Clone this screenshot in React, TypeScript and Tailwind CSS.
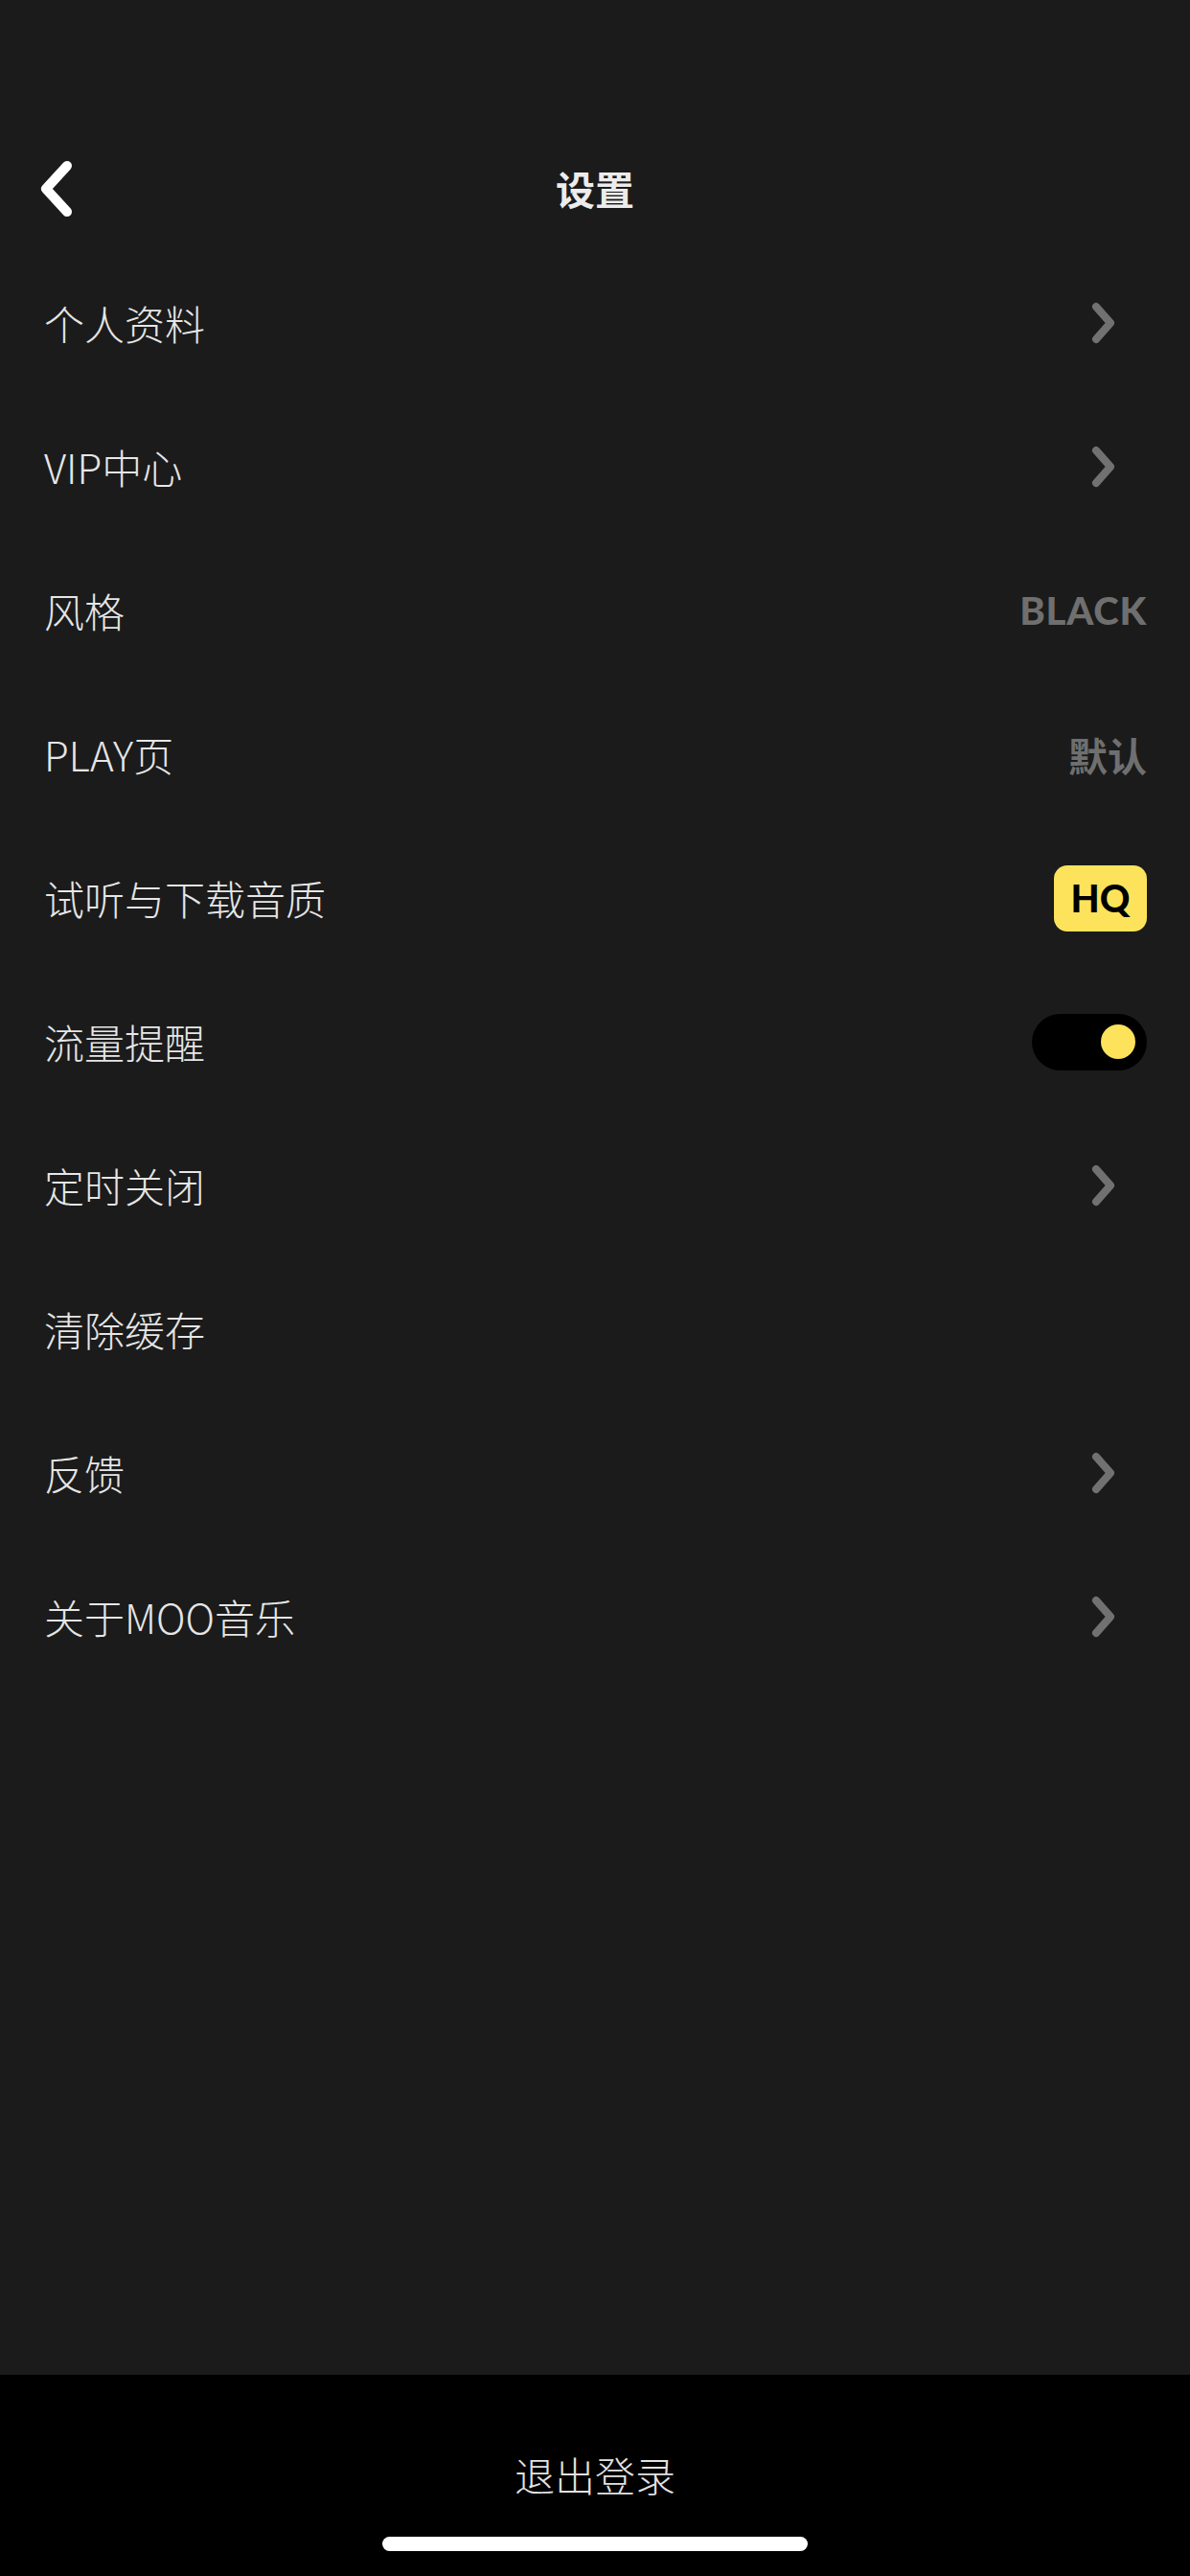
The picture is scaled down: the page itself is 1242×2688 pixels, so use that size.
import { ReactNode } from "react";

type Row = {
	label: string;
	right?: ReactNode;
};

const Chevron = () => (
	<svg width="28" height="46" viewBox="0 0 28 46" fill="none" className="mr-[31px]">
		<path d="M6 6 L21 23 L6 40" stroke="#717171" strokeWidth={8} strokeLinecap="round" strokeLinejoin="round" />
	</svg>
);

const Toggle = () => (
	<div className="w-[120px] h-[59px] rounded-full bg-black flex items-center justify-end pr-[12px]">
		<div className="w-[36px] h-[36px] rounded-full bg-[#fce35b]" />
	</div>
);

const rows: Row[] = [
	{ label: "个人资料", right: <Chevron /> },
	{ label: "VIP中心", right: <Chevron /> },
	{
		label: "风格",
		right: (
			<span className="text-[40px] font-black tracking-[0.8px] text-[#6f6f6f] font-['Lato',sans-serif] leading-none">
				BLACK
			</span>
		),
	},
	{
		label: "PLAY页",
		right: <span className="text-[41px] font-bold text-[#6f6f6f] leading-none">默认</span>,
	},
	{
		label: "试听与下载音质",
		right: (
			<div className="w-[97px] h-[69px] rounded-[14px] bg-[#fce35b] flex items-center justify-center">
				<span className="text-[39px] font-black text-black font-['Lato',sans-serif] leading-none">HQ</span>
			</div>
		),
	},
	{ label: "流量提醒", right: <Toggle /> },
	{ label: "定时关闭", right: <Chevron /> },
	{ label: "清除缓存" },
	{ label: "反馈", right: <Chevron /> },
	{ label: "关于MOO音乐", right: <Chevron /> },
];

export default function App() {
	return (
		<div className="w-[1242px] h-[2688px] bg-[#1b1b1b] flex flex-col font-['Noto_Sans_CJK_SC','Noto_Sans',sans-serif] overflow-hidden">
			{/* Header */}
			<div className="mt-[127px] h-[140px] relative flex items-center justify-center">
				<svg width="40" height="60" viewBox="0 0 40 60" fill="none" className="absolute left-[39px] top-[40px]">
					<path d="M31 6 L9 30 L31 54" stroke="#ffffff" strokeWidth={10} strokeLinecap="round" strokeLinejoin="round" />
				</svg>
				<h1 className="text-[41px] font-bold text-[#ececec] leading-none mt-[-2px]">设置</h1>
			</div>

			{/* Rows */}
			<div className="flex flex-col mt-[-5px]">
				{rows.map((row, idx) => (
					<div key={idx} className="h-[150px] flex items-center justify-between pl-[46px] pr-[45px]">
						<span className="text-[42px] font-light text-[#e6e6e6] leading-none">{row.label}</span>
						{row.right}
					</div>
				))}
			</div>

			<div className="flex-1" />

			{/* Logout */}
			<div className="h-[210px] bg-black flex flex-col items-center">
				<span className="mt-[83px] text-[42px] font-light text-[#e2e2e2] leading-none">退出登录</span>
				<div className="mt-[44px] w-[444px] h-[15px] rounded-full bg-white" />
			</div>
		</div>
	);
}
